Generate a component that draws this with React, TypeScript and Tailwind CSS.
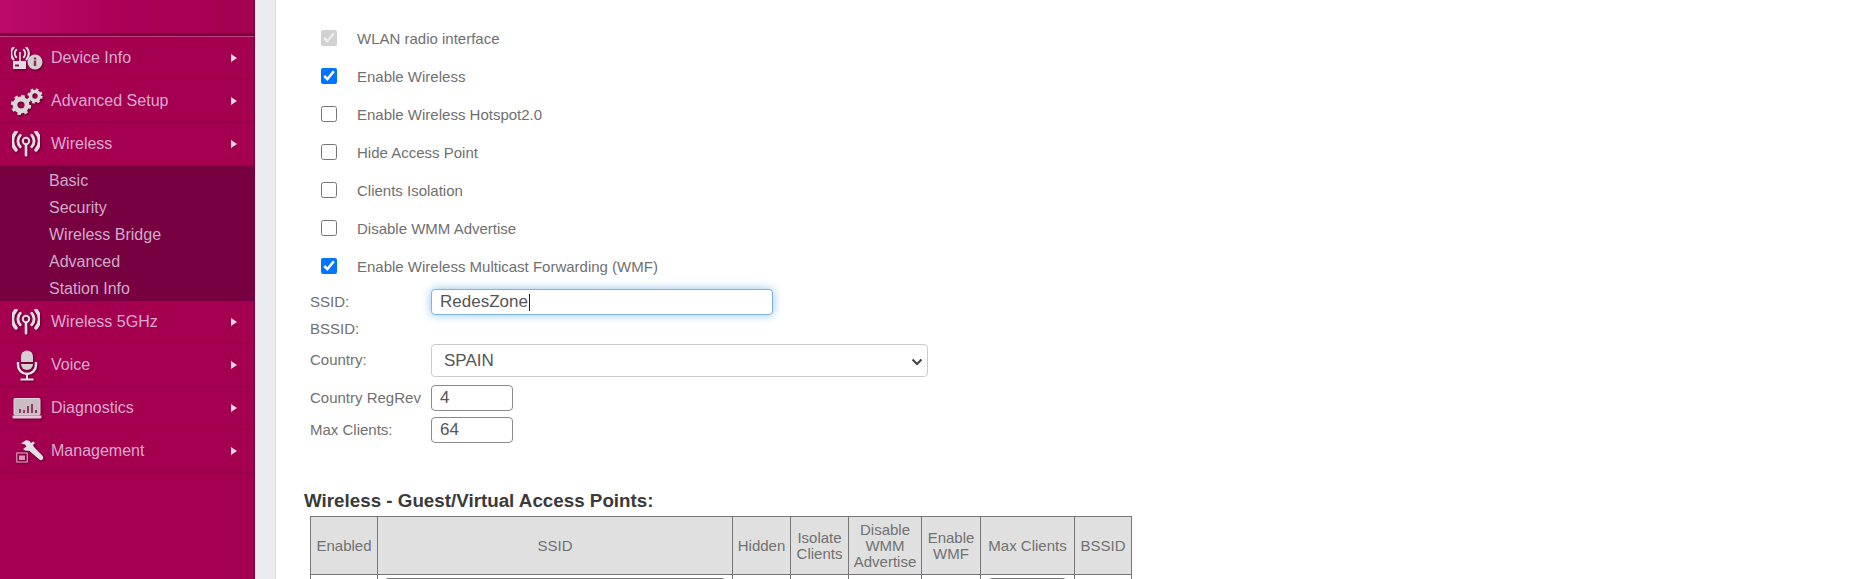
import type { ReactNode } from "react";

const FONT = "font-['Liberation_Sans',Arial,sans-serif]";

// All sidebar icons share the same fill and soft shadow
function IconBox({ w, h, vb, children, className }: { w: number; h: number; vb: string; children: ReactNode; className?: string }) {
  return (
    <svg width={w} height={h} viewBox={vb} className={"drop-shadow-[1px_1px_1px_rgba(60,0,30,0.7)] " + (className ?? "")}>
      {children}
    </svg>
  );
}

function Waves({ cx, cy, scale }: { cx: number; cy: number; scale: number }) {
  return (
    <g transform={`translate(${cx} ${cy}) scale(${scale})`} fill="none" stroke="#e4dce0" strokeLinecap="round">
      <path d="M-6 -6A8.5 8.5 0 0 0 -6 6" strokeWidth="3" />
      <path d="M6 -6A8.5 8.5 0 0 1 6 6" strokeWidth="3" />
      <path d="M-10.5 -9.5A14 14 0 0 0 -10.5 9.5" strokeWidth="3.6" />
      <path d="M10.5 -9.5A14 14 0 0 1 10.5 9.5" strokeWidth="3.6" />
    </g>
  );
}

function WirelessIcon() {
  return (
    <IconBox w={28} h={26} vb="0 0 28 26">
      <Waves cx={14} cy={10} scale={0.95} />
      <circle cx="14" cy="10" r="3.2" fill="none" stroke="#e4dce0" strokeWidth="2" />
      <rect x="12.7" y="13" width="2.6" height="12.5" rx="1" fill="#e4dce0" />
    </IconBox>
  );
}

function DeviceInfoIcon() {
  return (
    <IconBox w={32} h={23} vb="0 0 32 23">
      <Waves cx={9} cy={6.500} scale={0.62} />
      <rect x="8.200" y="5" width="1.600" height="9" fill="#e4dce0" />
      <rect x="2" y="14" width="13" height="8" fill="#e4dce0" />
      <rect x="4" y="17.500" width="4" height="2" fill="#a50050" />
      <circle cx="24" cy="15" r="7.500" fill="#d6ccd1" />
      <rect x="22.800" y="13.500" width="2.400" height="5.500" fill="#8c2a58" />
      <rect x="22.800" y="10.500" width="2.400" height="2" fill="#8c2a58" />
    </IconBox>
  );
}

function Gear({ cx, cy, r }: { cx: number; cy: number; r: number }) {
  const dash = (2 * Math.PI * r) / 16;
  return (
    <g>
      <circle cx={cx} cy={cy} r={r} fill="none" stroke="#dcd6d9" strokeWidth={r * 0.55} strokeDasharray={`${dash} ${dash}`} />
      <circle cx={cx} cy={cy} r={r * 0.75} fill="none" stroke="#dcd6d9" strokeWidth={r * 0.6} />
    </g>
  );
}

function GearsIcon() {
  return (
    <IconBox w={33} h={27} vb="0 0 33 27">
      <Gear cx={11} cy={17} r={8} />
      <Gear cx={25} cy={8} r={6} />
    </IconBox>
  );
}

function MicIcon() {
  return (
    <IconBox w={22} h={31} vb="0 0 22 31">
      <path d="M5 12V6.500a6 6 0 0 1 12 0V12z" fill="#d5cfd2" />
      <path d="M5 14h12a6 6 0 0 1-12 0z" fill="#d5cfd2" />
      <path d="M2 12v3a9 9 0 0 0 18 0v-3" fill="none" stroke="#eadfe4" strokeWidth="2.400" />
      <rect x="10" y="23" width="2" height="6" fill="#eadfe4" />
      <rect x="4.500" y="28.500" width="13" height="2" fill="#eadfe4" />
    </IconBox>
  );
}

function LaptopIcon() {
  return (
    <IconBox w={30} h={21} vb="0 0 30 21">
      <rect x="2" y="0.500" width="26" height="16.500" rx="1" fill="#c9bcc3" stroke="#e0d6db" />
      <rect x="7" y="11" width="2" height="4" fill="#8e3a62" />
      <rect x="11" y="12" width="2" height="3" fill="#8e3a62" />
      <rect x="15" y="8" width="2" height="7" fill="#8e3a62" />
      <rect x="19" y="6" width="2" height="9" fill="#8e3a62" />
      <rect x="23" y="12" width="2" height="3" fill="#8e3a62" />
      <path d="M0.500 17.500h29v1.500a1.500 1.500 0 0 1-1.500 1.500H2A1.500 1.500 0 0 1 .5 19z" fill="#edc7da" />
    </IconBox>
  );
}

function WrenchIcon() {
  return (
    <IconBox w={28} h={23} vb="0 0 28 23">
      <rect x="0.800" y="13" width="10.500" height="9" fill="none" stroke="#d99ab9" strokeWidth="1.200" />
      <rect x="3" y="15.500" width="6" height="4.500" fill="#d99ab9" />
      <path d="M5 3.500 9.500 .5c2.500-.5 4.500.5 5.500 2.500l2.500-1.500 1.500 1.500-2 2 1 2 8.200 8.500c1.300 1.500 1.300 3 .3 4-1 1-2.600.8-3.800-.5L13.500 11 9 10.500 7 9l3.500-2.500L9 4.500z" fill="#e6e0e3" />
    </IconBox>
  );
}

const menuTop = [
  { label: "Device Info", icon: <DeviceInfoIcon />, iconClass: "pl-[11px]" },
  { label: "Advanced Setup", icon: <GearsIcon />, iconClass: "pl-[10px]" },
  { label: "Wireless", icon: <WirelessIcon />, iconClass: "pl-[12px]" },
];

const menuBottom = [
  { label: "Wireless 5GHz", icon: <WirelessIcon />, iconClass: "pl-[12px]" },
  { label: "Voice", icon: <MicIcon />, iconClass: "pl-[16px]" },
  { label: "Diagnostics", icon: <LaptopIcon />, iconClass: "pl-[12px]" },
  { label: "Management", icon: <WrenchIcon />, iconClass: "pl-[16px]" },
];

const subMenu = ["Basic", "Security", "Wireless Bridge", "Advanced", "Station Info"];

function MenuItem({ label, icon, iconClass }: { label: string; icon: ReactNode; iconClass: string }) {
  return (
    <div className="flex h-[43px] items-center border-b border-[#960048]">
      <div className={"flex w-[51px] shrink-0 items-center " + iconClass}>{icon}</div>
      <span className="flex-1 text-[16px] text-[#d9a9cf]">{label}</span>
      <span className="mr-[17px] h-0 w-0 border-y-[4px] border-l-[6px] border-y-transparent border-l-[#f0d8e4]" />
    </div>
  );
}

function Sidebar() {
  return (
    <aside className="flex h-full w-[255px] shrink-0 flex-col border-r border-[#7c0040] bg-[#a50050]">
      <div className="h-[33px] bg-gradient-to-r from-[#bb0a6a] via-[#ab0056] to-[#a50050]" />
      <div className="h-[4px] border-b border-[#c0427f] bg-[#7f0040]" />
      {menuTop.map((m) => (
        <MenuItem key={m.label} label={m.label} icon={m.icon} iconClass={m.iconClass} />
      ))}
      <div className="flex h-[135px] flex-col bg-[#770040] pl-[49px] pt-px">
        {subMenu.map((s) => (
          <div key={s} className="flex h-[27px] shrink-0 items-center text-[16px] text-[#cfabc9]">
            {s}
          </div>
        ))}
      </div>
      {menuBottom.map((m) => (
        <MenuItem key={m.label} label={m.label} icon={m.icon} iconClass={m.iconClass} />
      ))}
    </aside>
  );
}

const checks = [
  { label: "WLAN radio interface", checked: true, disabled: true },
  { label: "Enable Wireless", checked: true },
  { label: "Enable Wireless Hotspot2.0", checked: false },
  { label: "Hide Access Point", checked: false },
  { label: "Clients Isolation", checked: false },
  { label: "Disable WMM Advertise", checked: false },
  { label: "Enable Wireless Multicast Forwarding (WMF)", checked: true },
];

const inputClass = "rounded-[4px] border bg-white px-[8px] text-[17px] text-[#555] outline-none";

function FormRow({ label, className, children }: { label: string; className: string; children?: ReactNode }) {
  return (
    <div className={"flex items-center pl-[6px] " + className}>
      <span className="w-[121px] shrink-0 text-[15px] text-[#707070]">{label}</span>
      {children}
    </div>
  );
}

const headers = [
  { label: "Enabled", w: "w-[67px]" },
  { label: "SSID", w: "w-[355px]" },
  { label: "Hidden", w: "w-[58px]" },
  { label: "Isolate Clients", w: "w-[58px]" },
  { label: "Disable WMM Advertise", w: "w-[73px]" },
  { label: "Enable WMF", w: "w-[59px]" },
  { label: "Max Clients", w: "w-[94px]" },
  { label: "BSSID", w: "w-[57px]" },
];

export default function App() {
  return (
    <div className={"flex h-[579px] w-[1863px] overflow-hidden bg-white " + FONT}>
      <Sidebar />
      <div className="h-full w-[21px] shrink-0 border-r border-[#dcdde0] bg-[#e9ebef]" />
      <main className="flex-1 pl-[28px] pt-[20px]">
        {checks.map((c) => (
          <label key={c.label} className="flex h-[38px] items-center gap-[20px] pl-[17px] text-[15px] text-[#707070]">
            <input
              type="checkbox"
              defaultChecked={c.checked}
              disabled={c.disabled}
              className="mb-[2px] h-4 w-4"
            />
            {c.label}
          </label>
        ))}

        <FormRow label="SSID:" className="mt-[3px] h-[26px]">
          <div className="relative">
            <input
              defaultValue="RedesZone"
              className={inputClass + " h-[26px] w-[342px] border-[#7fb4dc] shadow-[0_0_10px_rgba(102,175,233,0.75)]"}
            />
            <span className="absolute left-[98px] top-[5px] h-[17px] w-px bg-[#222]" />
          </div>
        </FormRow>
        <FormRow label="BSSID:" className="h-[29px]" />
        <FormRow label="Country:" className="h-[33px]">
          <div className="relative">
            <select
              defaultValue="SPAIN"
              className="h-[33px] w-[497px] appearance-none rounded-[4px] border border-[#ccc] bg-white pl-[12px] pt-px text-[17px] text-[#555]"
            >
              <option>SPAIN</option>
            </select>
            <svg width="12" height="8" viewBox="0 0 12 8" className="pointer-events-none absolute right-[5px] top-[14px]">
              <path d="M1.500 1.500 6 6l4.500-4.500" fill="none" stroke="#444" strokeWidth="2" />
            </svg>
          </div>
        </FormRow>
        <FormRow label="Country RegRev" className="mt-[8px] h-[26px]">
          <input defaultValue="4" className={inputClass + " h-[26px] w-[82px] border-[#8a8a8a]"} />
        </FormRow>
        <FormRow label="Max Clients:" className="mt-[6px] h-[26px]">
          <input defaultValue="64" className={inputClass + " h-[26px] w-[82px] border-[#8a8a8a]"} />
        </FormRow>

        <h3 className="mt-[45px] flex h-[26px] items-center text-[18.8px] font-bold text-[#3a3a3a]">
          Wireless - Guest/Virtual Access Points:
        </h3>
        <table className="ml-[6px] mt-[2px] w-[822px] table-fixed border-collapse text-[15px] leading-[16px] text-[#707070]">
          <thead>
            <tr className="h-[58px] bg-[#e0e0e0]">
              {headers.map((h) => (
                <th key={h.label} className={"border border-[#777] px-0 text-center font-normal " + h.w}>
                  {h.label}
                </th>
              ))}
            </tr>
          </thead>
          <tbody>
            <tr>
              <td className="border border-[#777]" />
              <td className="border border-[#777] px-[6px] pt-[3px]">
                <input className="h-[26px] w-full rounded-[4px] border border-[#777] bg-white" />
              </td>
              <td className="border border-[#777]" />
              <td className="border border-[#777]" />
              <td className="border border-[#777]" />
              <td className="border border-[#777]" />
              <td className="border border-[#777] px-[7px] pt-[3px]">
                <input className="h-[26px] w-full rounded-[4px] border border-[#777] bg-white" />
              </td>
              <td className="border border-[#777]" />
            </tr>
          </tbody>
        </table>
      </main>
    </div>
  );
}
